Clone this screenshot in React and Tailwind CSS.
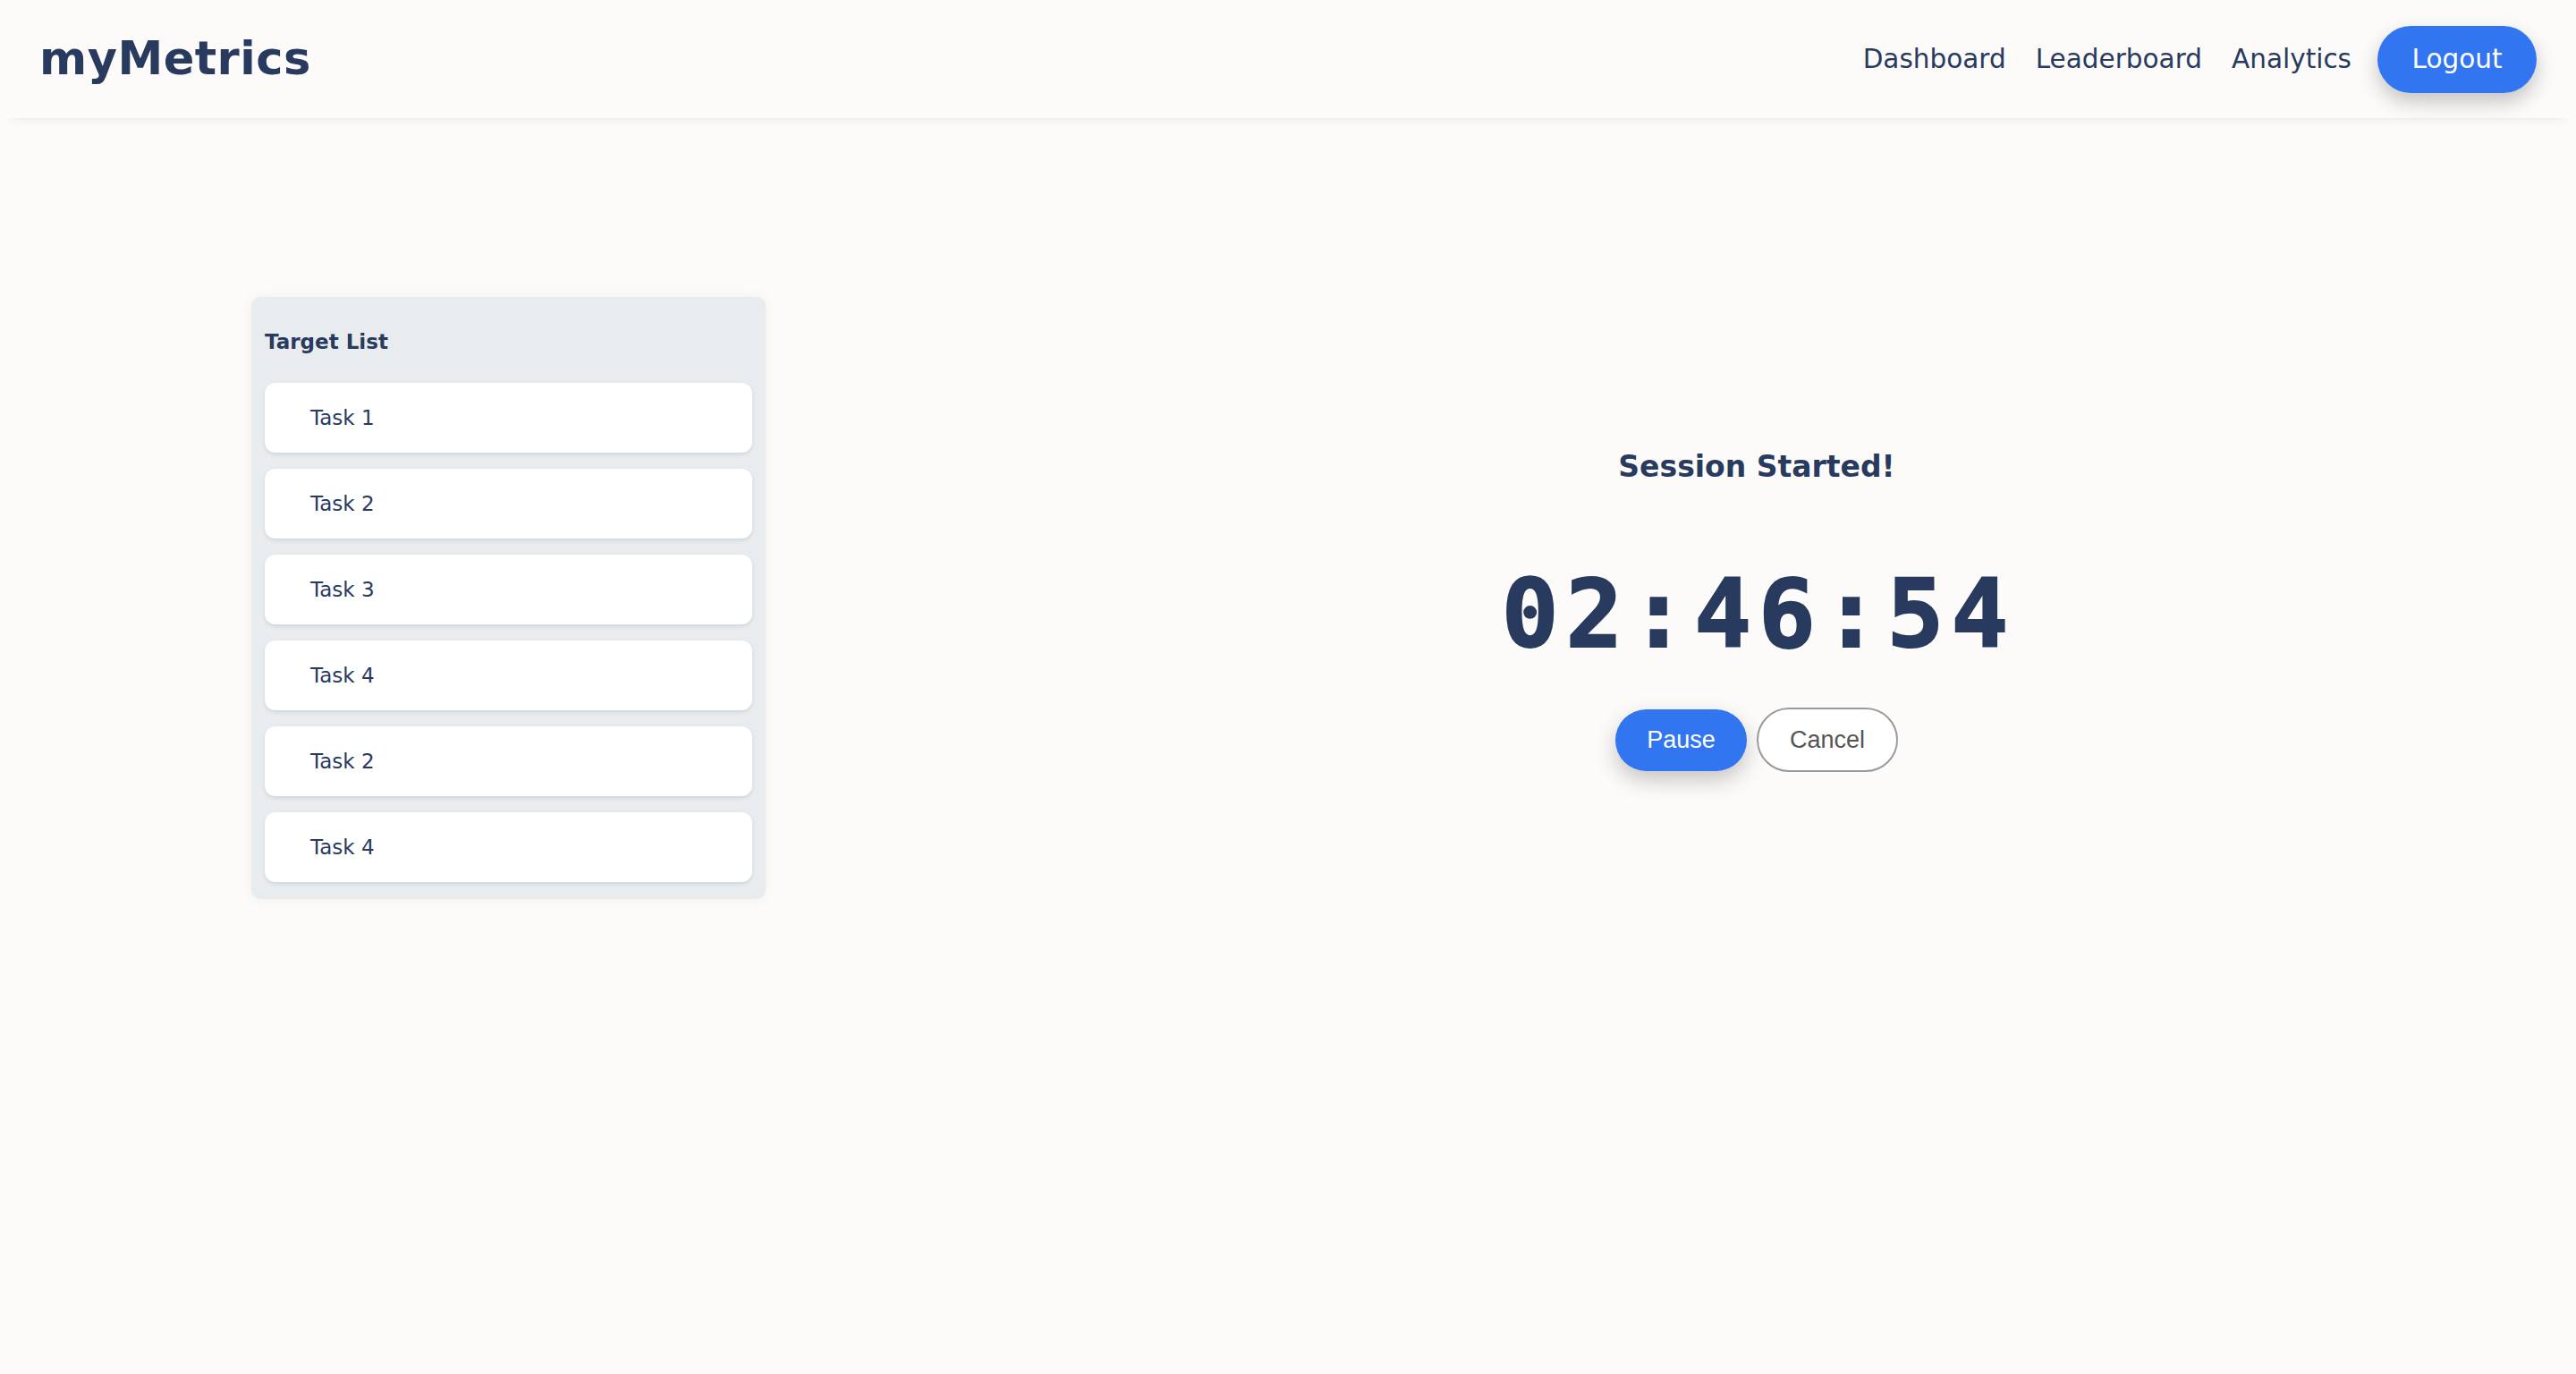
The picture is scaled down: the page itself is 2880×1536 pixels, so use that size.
import React from 'react';

const tasks = ['Task 1', 'Task 2', 'Task 3', 'Task 4', 'Task 2', 'Task 4'];

function Header() {
  return (
    <header className="h-[132px] flex items-center justify-between pl-[44px] pr-[44px] bg-[#fcfbfa] shadow-[0_8px_14px_-12px_rgba(0,0,0,0.16)] relative z-10">
      <div className="text-[51px] font-bold text-[#283a5e] tracking-[0.5px]">myMetrics</div>
      <nav className="flex items-center">
        <div className="flex items-center gap-[33px] text-[29.5px] text-[#283a5e]">
          <a href="#">Dashboard</a>
          <a href="#">Leaderboard</a>
          <a href="#">Analytics</a>
        </div>
        <button className="ml-[29px] w-[178px] h-[75px] rounded-full bg-[#3275f1] text-white text-[29.5px] shadow-[0_10px_22px_rgba(0,0,0,0.22)]">
          Logout
        </button>
      </nav>
    </header>
  );
}

function TargetList() {
  return (
    <div className="w-[575px] shrink-0 bg-[#e9ecef] rounded-[10px] px-[15px] pt-[36px] pb-[19px] shadow-[0_0_14px_rgba(0,0,0,0.05)]">
      <h2 className="text-[23px] font-bold text-[#283a5e] leading-[28px] mb-[32px]">Target List</h2>
      <div className="flex flex-col gap-[18px]">
        {tasks.map((t, i) => (
          <div
            key={i}
            className="h-[78px] bg-white rounded-[12px] flex items-center pl-[51px] text-[23px] text-[#283a5e] shadow-[0_2px_4px_rgba(0,0,0,0.1)]"
          >
            {t}
          </div>
        ))}
      </div>
    </div>
  );
}

function Timer() {
  return (
    <div className="flex-1 ml-[192px] flex flex-col items-center pt-[170px]">
      <h1 className="text-[33px] font-bold text-[#283a5e] leading-[40px]">Session Started!</h1>
      <div className="mt-[92px] pl-[4px] font-['DejaVu_Sans_Mono',monospace] font-bold text-[106px] leading-none tracking-[8px] text-[#283a5e] [-webkit-text-stroke:2px_#283a5e]">
        02:46:54
      </div>
      <div className="mt-[51px] flex items-center gap-[11px] font-['Liberation_Sans',Arial,sans-serif] text-[27px]">
        <button className="w-[147px] h-[69px] rounded-full bg-[#3275f1] text-white shadow-[0_10px_24px_rgba(0,0,0,0.22)]">
          Pause
        </button>
        <button className="w-[158px] h-[72px] rounded-full bg-white border-2 border-[#9a9a9a] text-[#555555]">
          Cancel
        </button>
      </div>
    </div>
  );
}

export default function App() {
  return (
    <div className="min-h-screen bg-[#fcfbfa] font-['DejaVu_Sans',sans-serif]">
      <Header />
      <main className="flex items-start pl-[281px] pt-[200px]">
        <TargetList />
        <Timer />
      </main>
    </div>
  );
}
